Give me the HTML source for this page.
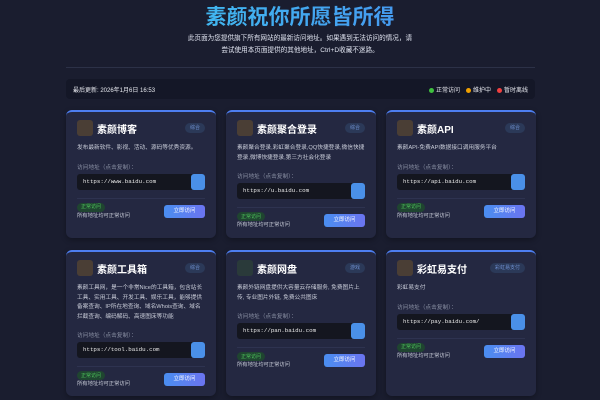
<!DOCTYPE html>
<html><head><meta charset="utf-8"><style>
*{margin:0;padding:0;box-sizing:border-box}
body{width:600px;height:400px;overflow:hidden;background:#1a1d2f;font-family:"Liberation Sans","Noto Sans CJK SC",sans-serif;color:#d0d4e0}
h1{position:absolute;top:4px;left:0;width:600px;text-align:center;font-size:21px;font-weight:bold;background:linear-gradient(90deg,#3cd5f0,#4a7cf0);-webkit-background-clip:text;color:transparent;line-height:28px}
.sub{position:absolute;top:33px;left:182px;width:236px;text-align:center;font-size:6.6px;line-height:12px;color:#e0e4f0}
.hr{position:absolute;top:67px;left:66px;width:469px;height:1px;background:#2c3147}
.bar{position:absolute;top:79px;left:66px;width:469px;height:20px;background:#141727;border-radius:4px;font-size:6px;color:#e8eaf0;display:flex;align-items:center;justify-content:space-between;padding:0 7px}
.bar span i{display:inline-block;width:5px;height:5px;border-radius:50%;margin:0 2px 0 6px;vertical-align:-1px}
.grid{position:absolute;top:110px;left:66px;width:470px;display:grid;grid-template-columns:150px 150px 150px;column-gap:10px;row-gap:12px}
.card{background:#242841;border-radius:6px;border-top:2px solid #4d7ef0;padding:8px 11px 5px;position:relative;min-height:128px;box-shadow:0 2px 6px rgba(0,0,0,.3)}
.hd{display:flex;align-items:center;height:16px}
.ic{width:16px;height:16px;border-radius:3px;background:#4a3e35;margin-right:4px}
.tt{font-size:10px;font-weight:bold;color:#fff;flex:1}
.tag{font-size:5px;color:#6f8fd0;background:#2b3958;border-radius:5px;padding:2px 5px;line-height:6px}
.ds{font-size:5.7px;line-height:9.5px;color:#c8ccd8;margin-top:8px}
.lb{font-size:5.7px;line-height:8px;color:#8a90a4;margin-top:10px}
.url{margin-top:2px;height:16px;background:#14161f;border-radius:3px;position:relative;font-family:"Liberation Mono",monospace;font-size:5.8px;color:#e8e8e8;line-height:16px;padding-left:6px}
.url b{position:absolute;right:0;top:0;width:14px;height:16px;background:#4a90e8;border-radius:3px}
.dv{height:1px;background:#2e3350;margin-top:8px}
.ft{position:relative;margin-top:4px;height:20px}
.bd{display:block;width:max-content;font-size:5px;line-height:6px;color:#4cc05a;background:#1f4530;border-radius:5px;padding:1.5px 4px}
.nt{font-size:5.3px;line-height:7px;color:#c8ccd8;margin-top:1px}
.btn{position:absolute;right:0;top:2px;width:41px;height:13px;border-radius:3px;background:linear-gradient(90deg,#4a8ef0,#6b74f0);font-size:5.5px;color:#fff;text-align:center;line-height:13px}
</style></head><body>
<h1>素颜祝你所愿皆所得</h1>
<div class="sub">此页面为您提供旗下所有网站的最新访问地址。如果遇到无法访问的情况，请<br>尝试使用本页面提供的其他地址，Ctrl+D收藏不迷路。</div>
<div class="hr"></div>
<div class="bar"><div>最后更新: 2026年1月6日 16:53</div><div><span><i style="background:#3fc03f"></i>正常访问</span><span><i style="background:#f0a000"></i>维护中</span><span><i style="background:#f04040"></i>暂时离线</span></div></div>
<div class="grid">
<div class="card"><div class="hd"><div class="ic"></div><div class="tt">素颜博客</div><div class="tag">综合</div></div><div class="ds">发布最新软件、影视、活动、源码等优秀资源。</div><div class="lb">访问地址（点击复制）：</div><div class="url">https://www.baidu.com<b></b></div><div class="dv"></div><div class="ft"><span class="bd">正常访问</span><div class="nt">所有地址均可正常访问</div><div class="btn">立即访问</div></div></div>
<div class="card"><div class="hd"><div class="ic"></div><div class="tt">素颜聚合登录</div><div class="tag">综合</div></div><div class="ds">素颜聚合登录,彩虹聚合登录,QQ快捷登录,微信快捷登录,微博快捷登录,第三方社会化登录</div><div class="lb">访问地址（点击复制）：</div><div class="url">https://u.baidu.com<b></b></div><div class="dv"></div><div class="ft"><span class="bd">正常访问</span><div class="nt">所有地址均可正常访问</div><div class="btn">立即访问</div></div></div>
<div class="card"><div class="hd"><div class="ic"></div><div class="tt">素颜API</div><div class="tag">综合</div></div><div class="ds">素颜API-免费API数据接口调用服务平台</div><div class="lb">访问地址（点击复制）：</div><div class="url">https://api.baidu.com<b></b></div><div class="dv"></div><div class="ft"><span class="bd">正常访问</span><div class="nt">所有地址均可正常访问</div><div class="btn">立即访问</div></div></div>
<div class="card"><div class="hd"><div class="ic"></div><div class="tt">素颜工具箱</div><div class="tag">综合</div></div><div class="ds">素颜工具网，是一个非常Nice的工具箱，包含站长工具、实用工具、开发工具、娱乐工具，能够提供备案查询、IP所在地查询、域名Whois查询、域名拦截查询、编码解码、高速图床等功能</div><div class="lb">访问地址（点击复制）：</div><div class="url">https://tool.baidu.com<b></b></div><div class="dv"></div><div class="ft"><span class="bd">正常访问</span><div class="nt">所有地址均可正常访问</div><div class="btn">立即访问</div></div></div>
<div class="card"><div class="hd"><div class="ic" style="background:#2a3a3a"></div><div class="tt">素颜网盘</div><div class="tag">游戏</div></div><div class="ds">素颜外链网盘提供大容量云存储服务, 免费图片上传, 专业图片外链, 免费公共图床</div><div class="lb">访问地址（点击复制）：</div><div class="url">https://pan.baidu.com<b></b></div><div class="dv"></div><div class="ft"><span class="bd">正常访问</span><div class="nt">所有地址均可正常访问</div><div class="btn">立即访问</div></div></div>
<div class="card"><div class="hd"><div class="ic"></div><div class="tt">彩虹易支付</div><div class="tag">彩虹易支付</div></div><div class="ds">彩虹易支付</div><div class="lb">访问地址（点击复制）：</div><div class="url">https://pay.baidu.com/<b></b></div><div class="dv"></div><div class="ft"><span class="bd">正常访问</span><div class="nt">所有地址均可正常访问</div><div class="btn">立即访问</div></div></div>
</div>
</body></html>
